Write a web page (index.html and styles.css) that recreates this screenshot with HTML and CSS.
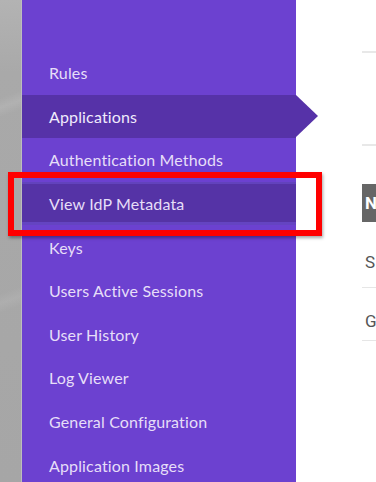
FILE: index.html
```html
<!DOCTYPE html>
<html>
<head>
<meta charset="utf-8">
<link rel="stylesheet" href="styles.css">
</head>
<body>
<div class="page">
  <div class="backdrop"></div>
  <nav class="sidebar">
    <ul class="menu">
      <li class="item">Rules</li>
      <li class="item active">Applications</li>
      <li class="item">Authentication Methods</li>
      <li class="item hover">View IdP Metadata</li>
      <li class="item">Keys</li>
      <li class="item">Users Active Sessions</li>
      <li class="item">User History</li>
      <li class="item">Log Viewer</li>
      <li class="item">General Configuration</li>
      <li class="item">Application Images</li>
    </ul>
  </nav>
  <main class="content">
    <div class="header-lines">
      <div class="rule"></div>
      <div class="rule second"></div>
    </div>
    <div class="table-head">N</div>
    <div class="row first">S</div>
    <div class="row">G</div>
  </main>
  <div class="annotation"></div>
</div>
</body>
</html>
```
FILE: styles.css
```css
html, body {
  margin: 0;
  padding: 0;
  background: #ffffff;
}
.page {
  position: relative;
  display: flex;
  width: 376px;
  height: 482px;
  overflow: hidden;
}
.backdrop {
  flex: 0 0 22px;
  background:
    linear-gradient(160deg, rgba(255,255,255,0) 0 20%, rgba(255,255,255,0.10) 22%, rgba(255,255,255,0) 24%, rgba(255,255,255,0) 60%, rgba(255,255,255,0.08) 62%, rgba(255,255,255,0) 64%),
    linear-gradient(180deg, #b3b3b3 0, #a9a9a9 15%, #a6a6a6 100%);
  border-right: 1px solid #bdbdbd;
  box-sizing: border-box;
}
.sidebar {
  flex: 0 0 274px;
  background: #6c41d0;
  padding-top: 51px;
  box-sizing: border-box;
}
.menu {
  list-style: none;
  margin: 0;
  padding: 0;
}
.item {
  position: relative;
  height: 43.6px;
  display: flex;
  align-items: center;
  padding-left: 27px;
  font-family: Lato, "Open Sans", sans-serif;
  font-size: 16px;
  color: #e6def8;
  letter-spacing: 0.15px;
}
.item.active {
  background: #5632a8;
  color: #f0ebfc;
}
.item.active::after {
  content: "";
  position: absolute;
  left: 100%;
  top: 0;
  border-top: 21.8px solid transparent;
  border-bottom: 21.8px solid transparent;
  border-left: 22px solid #5632a8;
}
.item.hover {
  background: #5533a6;
  box-shadow: inset 0 2px 0 #6242bd, inset 0 -3px 0 #6444c2;
}
.content {
  flex: 1;
  padding-left: 66px;
  font-family: Roboto, "Liberation Sans", sans-serif;
}
.header-lines {
  height: 184px;
  padding-top: 51px;
  box-sizing: border-box;
}
.rule {
  height: 2px;
  background: #e8e8e8;
}
.rule.second {
  margin-top: 91px;
}
.table-head {
  height: 38px;
  background: #666666;
  color: #ffffff;
  font-weight: 700;
  font-size: 17px;
  line-height: 38px;
  padding-left: 3px;
}
.row {
  height: 53px;
  border-bottom: 1.5px solid #e6e6e6;
  color: #555555;
  font-size: 17px;
  display: flex;
  align-items: center;
  padding-top: 14px;
  padding-left: 3px;
  box-sizing: border-box;
}
.row.first {
  height: 66px;
}
.annotation {
  position: absolute;
  left: 8px;
  top: 172px;
  width: 314px;
  height: 64px;
  border: 6px solid #ff0000;
  box-sizing: border-box;
  box-shadow: 1px 2px 3px rgba(0,0,0,0.35);
}
```
